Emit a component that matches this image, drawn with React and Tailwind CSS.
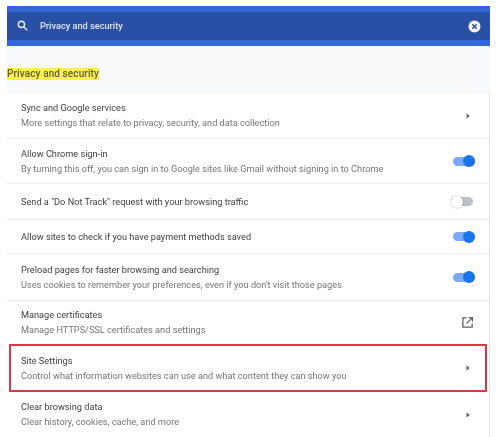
const font = { fontFamily: "Roboto, sans-serif" };

function Arrow() {
  return (
    <svg width="12" height="12" viewBox="0 0 12 12" className="shrink-0 mr-[10px]">
      <path d="M4.5 3.5 L7.8 6 L4.5 8.5 Z" fill="#5f6368" />
    </svg>
  );
}

function Toggle({ on }) {
  if (on) {
    return (
      <div className="relative h-[9px] w-[22px] rounded-full bg-[#7baaf7] mr-[9px] shrink-0">
        <div className="absolute right-0 top-[-1.5px] h-[12px] w-[12px] rounded-full bg-[#1a73e8]" />
      </div>
    );
  }
  return (
    <div className="relative h-[9px] w-[22px] rounded-full bg-[#bdc1c6] mr-[11px] shrink-0">
      <div className="absolute left-0 top-[-1.5px] h-[12px] w-[12px] rounded-full bg-white shadow-[0_0_2px_rgba(0,0,0,0.35)]" />
    </div>
  );
}

function External() {
  return (
    <svg width="13" height="13" viewBox="0 0 14 14" fill="none" stroke="#5f6368" strokeWidth="1.4" className="shrink-0 mr-[10px]">
      <path d="M6 2H2v10h10V8" />
      <path d="M8 1.7h4.3V6M12 2 6 8" />
    </svg>
  );
}

function Row({ title, sub, right, h, last, boxed }) {
  return (
    <div
      className={`relative flex items-center justify-between pl-[14px] pr-[5px] ${h} ${last || boxed ? "" : "border-b border-[#eeeeee]"}`}
    >
      <div className="min-w-0">
        <div className="text-[9.2px] leading-[14px] text-[#3c3f42] whitespace-nowrap">{title}</div>
        {sub && <div className="text-[9.2px] leading-[14px] mt-[1px] text-[#74777b] whitespace-nowrap">{sub}</div>}
      </div>
      {right}
      {boxed && <div className="absolute inset-x-[2px] inset-y-0 border-2 border-[#dc3545] pointer-events-none" />}
    </div>
  );
}

export default function App() {
  return (
    <div className="h-[437px] w-[503px] overflow-hidden bg-white pt-[6px] pl-[7px] pr-[13px] blur-[0.35px]" style={font}>
      <div className="bg-[#f7f9fa] h-[431px] flex flex-col">
        <div className="h-[40px] bg-[#3367d6] py-[6px] shrink-0">
          <div className="h-[28px] bg-[#2a50a5] flex items-center justify-between pl-[10px] pr-[9px]">
            <div className="flex items-center gap-[12px]">
              <svg width="11" height="11" viewBox="0 0 13 13" fill="none" stroke="#e8eefb" strokeWidth="1.6">
                <circle cx="5.2" cy="5.2" r="3.7" />
                <path d="M8 8l4 4" />
              </svg>
              <span className="text-[9.2px] font-medium text-[#dfe6f5]">Privacy and security</span>
            </div>
            <svg width="13" height="13" viewBox="0 0 13 13">
              <circle cx="6.5" cy="6.5" r="6" fill="#f4f6fb" />
              <path d="M4.3 4.3l4.4 4.4M8.7 4.3 4.3 8.7" stroke="#2a50a5" strokeWidth="1.5" />
            </svg>
          </div>
        </div>
        <div className="h-[47px] shrink-0 flex items-center pt-[8px]">
          <span className="bg-[#fff04a] text-[10px] leading-[12px] font-medium text-[#5b5c48] tracking-[0.1px]">Privacy and security</span>
        </div>
        <div className="bg-white flex-1 border-r border-[#e4e4e4]">
          <Row h="h-[46px]" title="Sync and Google services" sub="More settings that relate to privacy, security, and data collection" right={<Arrow />} />
          <Row h="h-[45px]" title="Allow Chrome sign-in" sub="By turning this off, you can sign in to Google sites like Gmail without signing in to Chrome" right={<Toggle on />} />
          <Row h="h-[36px]" title={'Send a "Do Not Track" request with your browsing traffic'} right={<Toggle />} />
          <Row h="h-[34px]" title="Allow sites to check if you have payment methods saved" right={<Toggle on />} />
          <Row h="h-[47px]" title="Preload pages for faster browsing and searching" sub="Uses cookies to remember your preferences, even if you don't visit those pages" right={<Toggle on />} />
          <Row h="h-[43px]" last title="Manage certificates" sub="Manage HTTPS/SSL certificates and settings" right={<External />} />
          <Row h="h-[48px]" boxed title="Site Settings" sub="Control what information websites can use and what content they can show you" right={<Arrow />} />
          <Row h="h-[45px]" last title="Clear browsing data" sub="Clear history, cookies, cache, and more" right={<Arrow />} />
        </div>
      </div>
    </div>
  );
}
